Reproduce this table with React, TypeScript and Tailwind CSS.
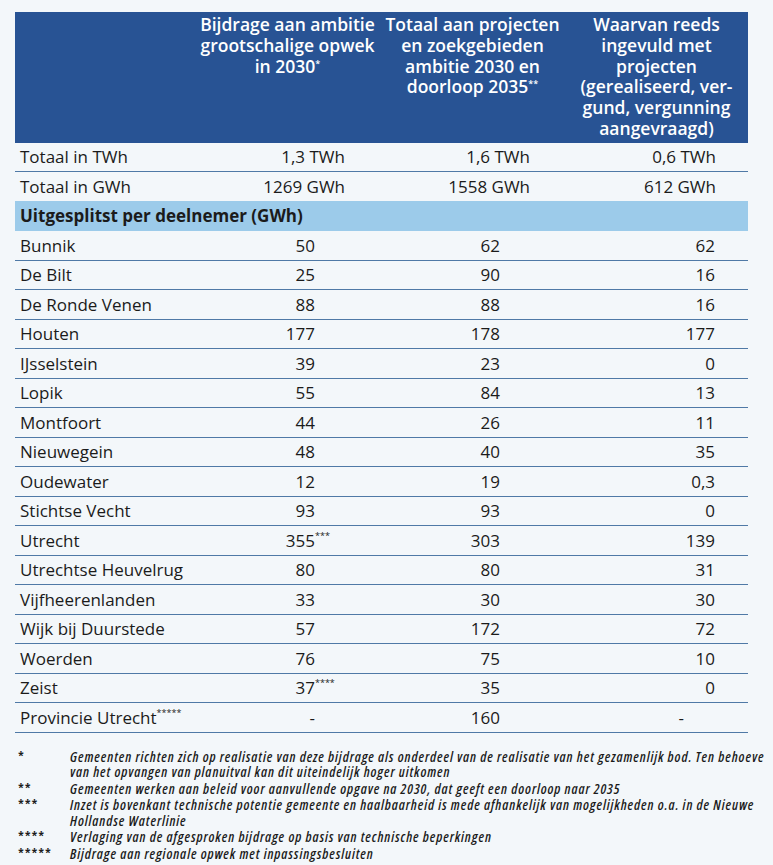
import React from "react";

type Row = {
  name: string;
  a: string;
  aSup?: string;
  b: string;
  c: string;
};

const rows: Row[] = [
  { name: "Bunnik", a: "50", b: "62", c: "62" },
  { name: "De Bilt", a: "25", b: "90", c: "16" },
  { name: "De Ronde Venen", a: "88", b: "88", c: "16" },
  { name: "Houten", a: "177", b: "178", c: "177" },
  { name: "IJsselstein", a: "39", b: "23", c: "0" },
  { name: "Lopik", a: "55", b: "84", c: "13" },
  { name: "Montfoort", a: "44", b: "26", c: "11" },
  { name: "Nieuwegein", a: "48", b: "40", c: "35" },
  { name: "Oudewater", a: "12", b: "19", c: "0,3" },
  { name: "Stichtse Vecht", a: "93", b: "93", c: "0" },
  { name: "Utrecht", a: "355", aSup: "***", b: "303", c: "139" },
  { name: "Utrechtse Heuvelrug", a: "80", b: "80", c: "31" },
  { name: "Vijfheerenlanden", a: "33", b: "30", c: "30" },
  { name: "Wijk bij Duurstede", a: "57", b: "172", c: "72" },
  { name: "Woerden", a: "76", b: "75", c: "10" },
  { name: "Zeist", a: "37", aSup: "****", b: "35", c: "0" },
];

const notes = [
  {
    mark: "*",
    lines: [
      "Gemeenten richten zich op realisatie van deze bijdrage als onderdeel van de realisatie van het gezamenlijk bod. Ten behoeve",
      "van het opvangen van planuitval kan dit uiteindelijk hoger uitkomen",
    ],
  },
  {
    mark: "**",
    lines: ["Gemeenten werken aan beleid voor aanvullende opgave na 2030, dat geeft een doorloop naar 2035"],
  },
  {
    mark: "***",
    lines: [
      "Inzet is bovenkant technische potentie gemeente en haalbaarheid is mede afhankelijk van mogelijkheden o.a. in de Nieuwe",
      "Hollandse Waterlinie",
    ],
  },
  {
    mark: "****",
    lines: ["Verlaging van de afgesproken bijdrage op basis van technische beperkingen"],
  },
  {
    mark: "*****",
    lines: ["Bijdrage aan regionale opwek met inpassingsbesluiten"],
  },
];

const Stars = ({ s }: { s: string }) => (
  <span className="absolute left-full top-[2px] text-[9px] leading-none">{s}</span>
);

export default function App() {
  return (
    <div
      className="min-h-[865px] w-[773px] bg-[#f3f7fa] pt-3 text-[#1b1b1b]"
      style={{ fontFamily: '"Open Sans", "Liberation Sans", sans-serif' }}
    >
      <div className="mx-[15px] w-[733px]">
        {/* Column headers */}
        <div className="flex h-[131px] bg-[#285394] pt-[2px] text-[17.5px] font-semibold leading-[20.8px] text-white">
          <div className="w-[180px]" />
          <div className="w-[185px] text-center">
            Bijdrage aan ambitie
            <br />
            grootschalige opwek
            <br />
            in 2030<span className="relative -top-[6px] text-[9px] leading-none">*</span>
          </div>
          <div className="w-[185px] text-center">
            Totaal aan projecten
            <br />
            en zoekgebieden
            <br />
            ambitie 2030 en
            <br />
            doorloop 2035<span className="relative -top-[6px] text-[9px] leading-none">**</span>
          </div>
          <div className="w-[183px] text-center">
            Waarvan reeds
            <br />
            ingevuld met
            <br />
            projecten
            <br />
            (gerealiseerd, ver-
            <br />
            gund, vergunning
            <br />
            aangevraagd)
          </div>
        </div>

        {/* Totals */}
        <div className="flex h-[29px] items-center border-b-[1.5px] border-[#4f79a6] text-[17px]">
          <div className="w-[180px] pl-[5px]">Totaal in TWh</div>
          <div className="w-[185px] pr-[35px] text-right">1,3 TWh</div>
          <div className="w-[185px] pr-[35px] text-right">1,6 TWh</div>
          <div className="w-[183px] pr-[32px] text-right">0,6 TWh</div>
        </div>
        <div className="flex h-[29px] items-center text-[17px]">
          <div className="w-[180px] pl-[5px]">Totaal in GWh</div>
          <div className="w-[185px] pr-[35px] text-right">1269 GWh</div>
          <div className="w-[185px] pr-[35px] text-right">1558 GWh</div>
          <div className="w-[183px] pr-[32px] text-right">612 GWh</div>
        </div>

        {/* Section band */}
        <div className="flex h-[30px] items-center bg-[#9ccbea] pl-[5px] text-[17px] font-bold">
          Uitgesplitst per deelnemer (GWh)
        </div>

        {/* Participants */}
        {rows.map((r) => (
          <div
            key={r.name}
            className="flex h-[29.5px] items-center border-b-[1.5px] border-[#4f79a6] text-[17px]"
          >
            <div className="w-[180px] pl-[5px]">{r.name}</div>
            <div className="w-[185px] pr-[65px] text-right">
              <span className="relative">
                {r.a}
                {r.aSup && <Stars s={r.aSup} />}
              </span>
            </div>
            <div className="w-[185px] pr-[65px] text-right">{r.b}</div>
            <div className="w-[183px] pr-[33px] text-right">{r.c}</div>
          </div>
        ))}
        <div className="flex h-[29.5px] items-center border-b-[1.5px] border-[#4f79a6] text-[17px]">
          <div className="w-[180px] pl-[5px]">
            <span className="relative">
              Provincie Utrecht
              <Stars s="*****" />
            </span>
          </div>
          <div className="w-[185px] pr-[65px] text-right">-</div>
          <div className="w-[185px] pr-[65px] text-right">160</div>
          <div className="w-[183px] pr-[64px] text-right">-</div>
        </div>

        {/* Footnotes */}
        <div className="mt-[16px] flex flex-col gap-[1px] text-[14px] font-semibold italic leading-[15.5px] tracking-[0.9px] [font-stretch:75%]">
          {notes.map((n) => (
            <div key={n.mark} className="flex">
              <div className="w-[55px] shrink-0 pl-[3px] not-italic">{n.mark}</div>
              <div className="whitespace-nowrap">
                {n.lines.map((l, i) => (
                  <div key={i}>{l}</div>
                ))}
              </div>
            </div>
          ))}
        </div>
      </div>
    </div>
  );
}
